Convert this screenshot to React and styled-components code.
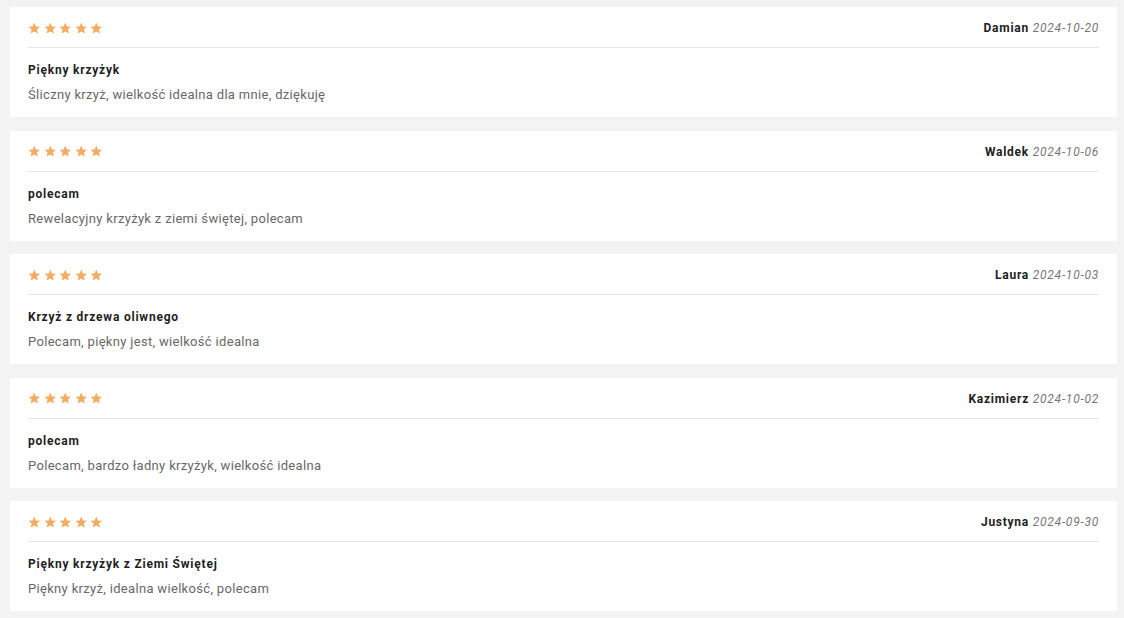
import React from "react";
import styled, { createGlobalStyle } from "styled-components";

const Global = createGlobalStyle`
  html, body { margin: 0; padding: 0; background: #f3f3f3; }
  body { font-family: Roboto, "Noto Sans", Arial, sans-serif; -webkit-font-smoothing: antialiased; }
`;

const List = styled.div`
  display: flex;
  flex-direction: column;
  gap: 13.5px;
  padding: 7px 7px 7px 10px;
`;

const Card = styled.article`
  background: #fff;
  height: 110px;
  box-sizing: border-box;
  padding: 11px 18px 12px;
  display: flex;
  flex-direction: column;
`;

const Header = styled.div`
  display: flex;
  align-items: center;
  justify-content: space-between;
  height: 20px;
  padding-bottom: 9px;
  border-bottom: 1px solid #e6e6e6;
`;

const Stars = styled.div`
  display: flex;
  gap: 3px;
`;

const Meta = styled.div`
  font-size: 12px;
  letter-spacing: 0.75px;
  line-height: 20px;
`;

const Author = styled.span`
  font-weight: 700;
  color: #222;
`;

const DateText = styled.span`
  font-style: italic;
  color: #777;
`;

const Title = styled.div`
  margin-top: 12px;
  font-size: 12px;
  font-weight: 700;
  color: #1f1f1f;
  letter-spacing: 0.78px;
  line-height: 20px;
`;

const Body = styled.div`
  margin-top: 5px;
  font-size: 13px;
  color: #686868;
  letter-spacing: 0.32px;
  line-height: 20px;
`;

const Star = () => (
  <svg width="12.5" height="12.5" viewBox="0 0 24 24">
    <path
      fill="#f4ab62"
      d="M12 1l3.2 7.4 8 .7-6.1 5.3 1.9 7.9L12 18.1l-7 4.2 1.9-7.9L.8 9.1l8-.7z"
    />
  </svg>
);

const reviews = [
  { author: "Damian", date: "2024-10-20", title: "Piękny krzyżyk", text: "Śliczny krzyż, wielkość idealna dla mnie, dziękuję" },
  { author: "Waldek", date: "2024-10-06", title: "polecam", text: "Rewelacyjny krzyżyk z ziemi świętej, polecam" },
  { author: "Laura", date: "2024-10-03", title: "Krzyż z drzewa oliwnego", text: "Polecam, piękny jest, wielkość idealna" },
  { author: "Kazimierz", date: "2024-10-02", title: "polecam", text: "Polecam, bardzo ładny krzyżyk, wielkość idealna" },
  { author: "Justyna", date: "2024-09-30", title: "Piękny krzyżyk z Ziemi Świętej", text: "Piękny krzyż, idealna wielkość, polecam" },
];

export default function App() {
  return (
    <>
      <Global />
      <List>
        {reviews.map((r, i) => (
          <Card key={i}>
            <Header>
              <Stars>
                {[0, 1, 2, 3, 4].map((s) => (
                  <Star key={s} />
                ))}
              </Stars>
              <Meta>
                <Author>{r.author}</Author> <DateText>{r.date}</DateText>
              </Meta>
            </Header>
            <Title>{r.title}</Title>
            <Body>{r.text}</Body>
          </Card>
        ))}
      </List>
    </>
  );
}
